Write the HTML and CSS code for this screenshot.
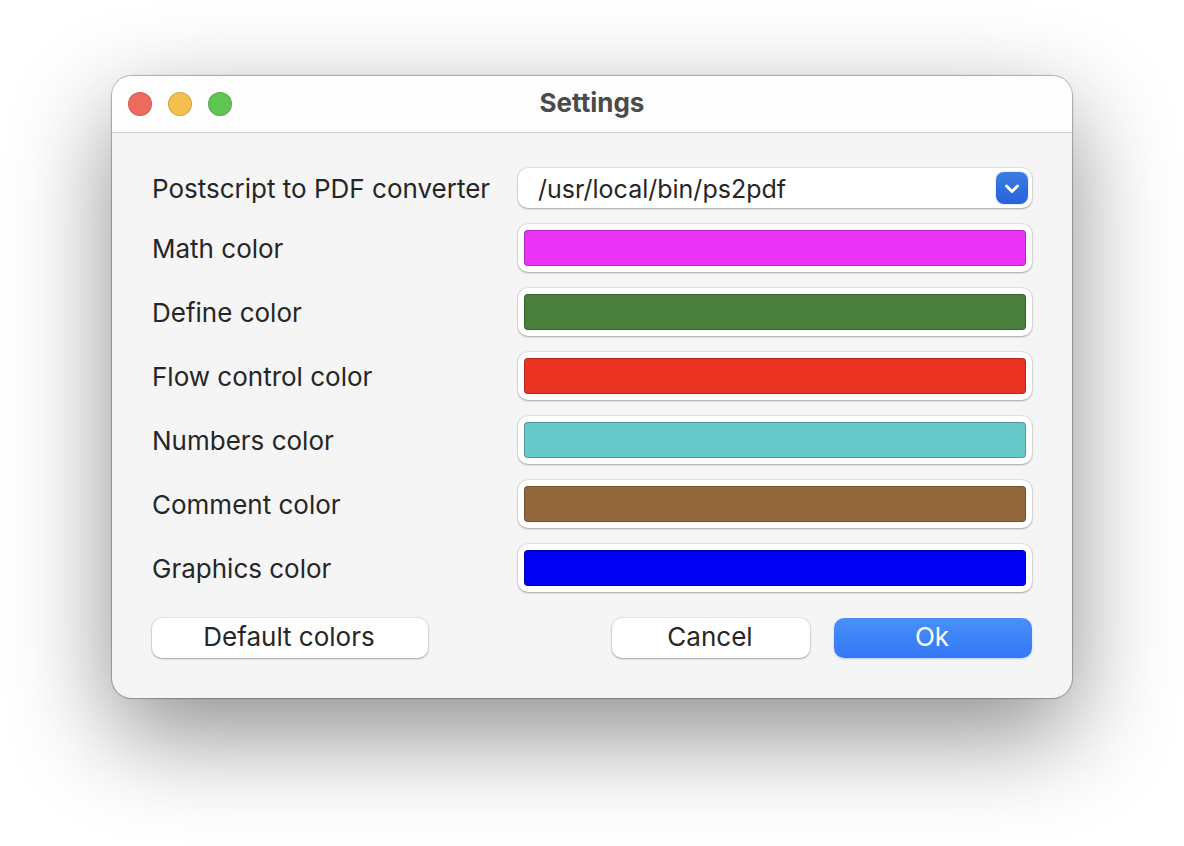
FILE: index.html
```html
<!DOCTYPE html>
<html lang="en">
<head>
<meta charset="utf-8">
<meta name="viewport" content="width=device-width, initial-scale=1">
<title>Settings</title>
<link rel="stylesheet" href="styles.css">
</head>
<body>
<main class="window">
  <header class="titlebar">
    <div class="lights">
      <button class="light light-close" type="button" aria-label="Close"></button>
      <button class="light light-minimize" type="button" aria-label="Minimize"></button>
      <button class="light light-zoom" type="button" aria-label="Zoom"></button>
    </div>
    <h1 class="title">Settings</h1>
  </header>
  <form class="content">
    <div class="fields">
      <label class="label" for="converter">Postscript to PDF converter</label>
      <div class="select-wrap">
        <select class="select" id="converter">
          <option>/usr/local/bin/ps2pdf</option>
        </select>
        <span class="select-arrow" aria-hidden="true">
          <svg width="32" height="32" viewBox="0 0 32 32" fill="none" stroke="#fff" stroke-width="3" stroke-linecap="round" stroke-linejoin="round"><path d="M10.5 14 L16 19.5 L21.5 14"/></svg>
        </span>
      </div>
      <label class="label" for="math">Math color</label>
      <input class="well" type="color" id="math" value="#eb33f7">
      <label class="label" for="define">Define color</label>
      <input class="well" type="color" id="define" value="#4a7e3d">
      <label class="label" for="flow">Flow control color</label>
      <input class="well" type="color" id="flow" value="#ea3323">
      <label class="label" for="numbers">Numbers color</label>
      <input class="well" type="color" id="numbers" value="#68c9ca">
      <label class="label" for="comment">Comment color</label>
      <input class="well" type="color" id="comment" value="#93683c">
      <label class="label" for="graphics">Graphics color</label>
      <input class="well" type="color" id="graphics" value="#0000f5">
    </div>
    <div class="actions">
      <button class="button button-wide" type="button">Default colors</button>
      <div class="confirm">
        <button class="button" type="button">Cancel</button>
        <button class="button button-primary" type="submit">Ok</button>
      </div>
    </div>
  </form>
</main>
</body>
</html>
```
FILE: styles.css
```css
* {
  box-sizing: border-box;
}

body {
  min-height: 100vh;
  margin: 0;
  padding: 76px 112px 148px;
  background: #fff;
  color: #262626;
  font-family: Inter, "Liberation Sans", sans-serif;
  font-size: 25px;
  line-height: 32px;
}

.window {
  border-radius: 20px;
  background: #f5f5f5;
  box-shadow: 0 0 1px 1px rgba(0, 0, 0, 0.28), 0 36px 100px rgba(0, 0, 0, 0.45);
}

.titlebar {
  display: grid;
  grid-template-columns: 1fr auto 1fr;
  align-items: center;
  height: 57px;
  padding: 0 16px;
  border-bottom: 1px solid #cfcfcf;
  border-radius: 20px 20px 0 0;
  background: #fdfdfd;
}

.lights {
  display: flex;
  gap: 16px;
}

.light {
  width: 24px;
  height: 24px;
  padding: 0;
  border: 1px solid rgba(0, 0, 0, 0.14);
  border-radius: 50%;
}

.light-close {
  background: #ec6a5e;
}

.light-minimize {
  background: #f5bf4f;
}

.light-zoom {
  background: #61c554;
}

.title {
  margin: 0;
  padding-bottom: 2px;
  color: #4b4b4b;
  font-size: 26px;
  font-weight: 700;
}

.content {
  padding: 35px 40px 40px;
}

.fields {
  display: grid;
  grid-template-columns: 350px 1fr;
  gap: 16px;
  align-items: center;
}

.label {
  padding-top: 2px;
  font-size: 26px;
  white-space: nowrap;
}

.select-wrap {
  position: relative;
}

.select,
.well,
.button {
  border: 0;
  border-radius: 10px;
  background: #fff;
  color: inherit;
  font: inherit;
  box-shadow: 0 0 1px 1px rgba(0, 0, 0, 0.07), 0 1px 2px rgba(0, 0, 0, 0.28);
}

.select {
  display: block;
  width: 100%;
  height: 40px;
  padding: 2px 44px 0 20px;
  appearance: none;
}

.select-arrow {
  position: absolute;
  top: 4px;
  right: 4px;
  width: 32px;
  height: 32px;
  border-radius: 8px;
  background: linear-gradient(#3a7de2, #2762dd);
  box-shadow: 0 0 2px rgba(39, 98, 221, 0.4);
  pointer-events: none;
}

.select-arrow svg {
  display: block;
}

.well {
  width: 100%;
  height: 48px;
  padding: 6px;
  appearance: none;
}

.well::-webkit-color-swatch-wrapper {
  padding: 0;
}

.well::-webkit-color-swatch {
  border: 1px solid rgba(0, 0, 0, 0.25);
  border-radius: 4px;
}

.actions {
  display: flex;
  justify-content: space-between;
  margin-top: 26px;
}

.confirm {
  display: flex;
  gap: 24px;
}

.button {
  width: 198px;
  height: 40px;
  padding: 0 2px 2px 0;
  font-size: 26px;
}

.button-wide {
  width: 276px;
}

.button-primary {
  background: linear-gradient(#4a90f8, #3377f6);
  color: #fff;
  box-shadow: 0 1px 2px rgba(51, 119, 246, 0.35);
}
```
